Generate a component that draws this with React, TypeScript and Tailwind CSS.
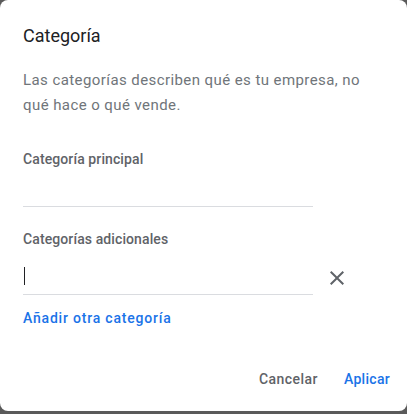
import React from "react";

function CloseIcon() {
  return (
    <svg width="24" height="24" viewBox="0 0 24 24" className="fill-[#5f6368]">
      <path d="M19 6.41L17.59 5 12 10.59 6.41 5 5 6.41 10.59 12 5 17.59 6.41 19 12 13.41 17.59 19 19 17.59 13.41 12z" />
    </svg>
  );
}

export default function App() {
  return (
    <div className="w-[407px] h-[414px] bg-[#5a5a5a] overflow-hidden font-['Roboto',sans-serif]">
      <div className="w-[407px] h-[411px] bg-white rounded-lg flex flex-col pl-[23px] pr-[17px]">
        <h1 className="mt-6 text-[18px] leading-6 text-[#202124] font-normal">Categoría</h1>

        <p className="mt-[20px] text-[15px] leading-[25px] text-[#70757a] tracking-[0.42px] pr-2">
          Las categorías describen qué es tu empresa, no qué hace o qué vende.
        </p>

        <label className="mt-[31px] text-[14px] leading-5 font-medium text-[#5f6368] tracking-[0.1px]">
          Categoría principal
        </label>
        <div className="w-[290px] h-[38px] border-b border-[#dadce0]" />

        <label className="mt-[22px] text-[14px] leading-5 font-medium text-[#5f6368] tracking-[0.1px]">
          Categorías adicionales
        </label>
        <div className="flex items-end gap-3">
          <div className="w-[290px] h-[46px] border-b border-[#dadce0] flex items-end pb-[9px] pl-px">
            <span className="block w-px h-[18px] bg-[#202124]" />
          </div>
          <div className="mb-[5px]">
            <CloseIcon />
          </div>
        </div>

        <button className="mt-[13px] self-start text-[14px] leading-5 font-medium text-[#1a73e8] tracking-[0.8px]">
          Añadir otra categoría
        </button>

        <div className="mt-[41px] flex justify-end gap-[26px]">
          <button className="text-[14px] leading-5 font-medium text-[#5f6368] tracking-[0.45px]">Cancelar</button>
          <button className="text-[14px] leading-5 font-medium text-[#1a73e8] tracking-[0.3px]">Aplicar</button>
        </div>
      </div>
    </div>
  );
}
